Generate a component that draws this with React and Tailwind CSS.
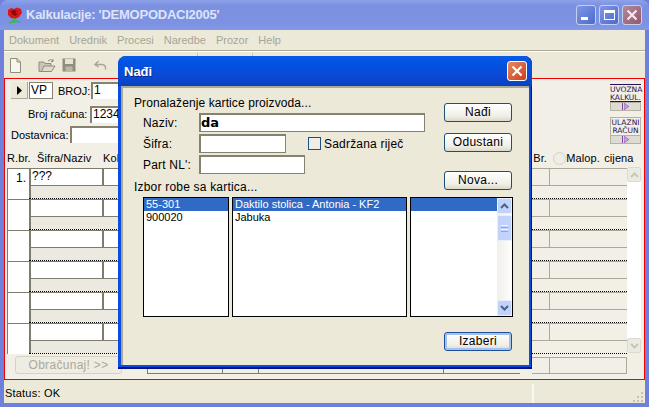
const font = { fontFamily: '"Liberation Sans", Arial, sans-serif' };

function Rose() {
  return (
    <svg width="17" height="17" viewBox="0 0 17 17">
      <path d="M2 3 L5 1 L8 2 L11 0.5 L15 2 L16 6 L13 10 L9 12 L5 11 L2 8 Z" fill="#d81818" />
      <path d="M5 4 L8 3 L11 4 L9 6 L12 7 L9 9 L6 7 Z" fill="#8a0808" />
      <path d="M8 11 L8 16 M8 14 L3 16 M9 14 L14 15" stroke="#2fc42f" strokeWidth="1.6" fill="none" />
    </svg>
  );
}

function TitleButton({ kind }) {
  const bg = kind === "close"
    ? "bg-[linear-gradient(135deg,#b08a9c,#98566c)]"
    : "bg-[linear-gradient(135deg,#7f97e8,#4e69cc)]";
  return (
    <div className={`w-[20px] h-[20px] rounded-[3px] border border-[#c4d0f0] flex items-center justify-center ${bg}`}>
      {kind === "min" && <div className="w-[7px] h-[3px] bg-white mt-[7px] mr-[3px]" />}
      {kind === "max" && <div className="w-[11px] h-[10px] border border-t-[3px] border-white" />}
      {kind === "close" && (
        <svg width="12" height="12" viewBox="0 0 12 12"><path d="M1.5 1.5 L10.5 10.5 M10.5 1.5 L1.5 10.5" stroke="#f2e9ee" strokeWidth="2.2" /></svg>
      )}
    </div>
  );
}

function Toolbar() {
  return (
    <div className="h-[27px] flex items-center pl-[5px] border-t border-[#fff]">
      <svg width="13" height="15" viewBox="0 0 13 15"><path d="M1.5 .5 H8 L11.5 4 V14.5 H1.5 Z M8 .5 V4 H11.5" fill="#f6f5ee" stroke="#8f8d80" /></svg>
      <svg className="ml-[16px]" width="18" height="15" viewBox="0 0 18 15"><path d="M1 4 H6 L7 5.5 H13 V13.5 H1 Z" fill="#c9c6b4" stroke="#8f8d80" /><path d="M3.5 13.5 L6 8 H17 L13.5 13.5 Z" fill="#dedbca" stroke="#8f8d80" /><path d="M10 3 Q13 0 15 3 M15 1 V3.5 H13" stroke="#8f8d80" fill="none" /></svg>
      <svg className="ml-[6px]" width="14" height="14" viewBox="0 0 14 14"><rect x=".5" y=".5" width="13" height="13" fill="#8f8d80" /><rect x="3" y="1" width="8" height="5" fill="#e6e3d3" /><rect x="3.5" y="8.5" width="7" height="5" fill="#bab7a7" /></svg>
      <svg className="ml-[18px]" width="13" height="10" viewBox="0 0 13 10"><path d="M4.5 1 L1 4.5 L4.5 7 M1.5 4.5 H8 Q12 4.5 11.5 9.5" stroke="#a7a596" strokeWidth="1.4" fill="none" /></svg>
      <div className="ml-[90px] self-start mt-[1px] w-[1px] h-[4px] bg-[#c4c1b0]" />
      <div className="ml-[54px] self-start mt-[1px] w-[1px] h-[4px] bg-[#c4c1b0]" />
    </div>
  );
}

function SideButton({ lines, className, boxed }) {
  return (
    <div className={`w-[31px] text-center text-[#2a1050] ${className || ""}`} style={{ fontFamily: '"DejaVu Sans", sans-serif' }}>
      <div className={boxed ? "h-[18px] border-t border-x border-[#b5b2a5] pt-[1px]" : "h-[18px] border-y border-[#2a1050] pt-[1px]"}>
        {lines.map((l) => <div key={l} className="text-[7.5px] leading-[8px] whitespace-nowrap">{l}</div>)}
      </div>
      <div className="h-[9px] mt-[0px] bg-[#dedcd2] border border-[#b5b2a5] flex items-center justify-center">
        <div className="w-[1px] h-[7px] bg-[#7a4aa0] mr-[1px]" />
        <svg width="5" height="7" viewBox="0 0 5 7"><path d="M0 0 L5 3.5 L0 7 Z" fill="#c79ae0" stroke="#7a4aa0" strokeWidth=".5" /></svg>
      </div>
    </div>
  );
}

function Row({ first }) {
  return (
    <div className="h-[31px] flex">
      <div className="w-[22px] bg-white border-t border-l border-[#7f7c6e] text-[12px] leading-[19px] pl-[8px]">{first}</div>
      <div className="flex-1 min-w-0 flex flex-col">
        <div className="h-[17px] flex">
          <div className="w-[73px] bg-white border-t border-l-2 border-[#7f7c6e] text-[12px] leading-[15px] pl-[1px]">{first ? "???" : ""}</div>
          <div className="w-[430px] bg-white border-t border-l-2 border-[#7f7c6e]" />
          <div className="w-[17px] border-t border-[#aca899]" />
          <div className="w-[78px] border-t border-l border-[#aca899]" />
        </div>
        <div className="flex-1 flex border-b border-black [border-bottom-style:dotted]">
          <div className="w-[503px] bg-[#ebe9e0] border-t border-l-2 border-[#7f7c6e]" />
          <div className="w-[95px] border-t border-[#aca899]" />
        </div>
      </div>
    </div>
  );
}

function XpButton({ children, className }) {
  return (
    <button className={`w-[68px] h-[19px] rounded-[3px] border border-[#1c4f7c] bg-[linear-gradient(#ffffff,#f0efe8_70%,#dcd8ca)] text-[12px] tracking-[0.3px] leading-[15px] text-black text-center ${className || ""}`}>
      {children}
    </button>
  );
}

function Field({ label, widthClass, children }) {
  return (
    <div className="h-[21px] flex items-center">
      <span className="w-[65px] pl-[9px] text-[12px] leading-[16px] tracking-[0.2px] whitespace-nowrap">{label}</span>
      <div className={`h-[19px] bg-white border-2 border-b border-r border-[#85826f] ${widthClass}`}>{children}</div>
    </div>
  );
}

function ListBox({ width, items, children }) {
  return (
    <div className={`relative h-[120px] bg-white border border-black ${width}`}>
      {items.map((t, i) => (
        <div key={i} className={`h-[13px] leading-[13px] text-[11px] pl-[2px] whitespace-nowrap ${i === 0 ? "bg-[#316ac5] text-white" : "text-black"}`}>{t || "\u00a0"}</div>
      ))}
      {children}
    </div>
  );
}

function ScrollBar() {
  return (
    <div className="absolute top-0 right-0 bottom-0 w-[15px] bg-[linear-gradient(90deg,#f0efe8,#fefefe)] flex flex-col justify-between">
      <div>
        <div className="h-[16px] bg-[#c1d3fb] border border-[#e8eefc] rounded-[2px] flex items-center justify-center">
          <svg width="9" height="6" viewBox="0 0 9 6"><path d="M1 5 L4.5 1.5 L8 5" stroke="#4d6185" strokeWidth="2" fill="none" /></svg>
        </div>
        <div className="h-[26px] mt-[1px] bg-[#c1d3fb] border border-[#e8eefc] rounded-[2px] flex flex-col items-center justify-center gap-[1px]">
          <div className="w-[7px] h-[1px] bg-[#eef3fe]" /><div className="w-[7px] h-[1px] bg-[#8da7dc]" /><div className="w-[7px] h-[1px] bg-[#eef3fe]" /><div className="w-[7px] h-[1px] bg-[#8da7dc]" />
        </div>
      </div>
      <div className="h-[16px] bg-[#c1d3fb] border border-[#e8eefc] rounded-[2px] flex items-center justify-center">
        <svg width="9" height="6" viewBox="0 0 9 6"><path d="M1 1 L4.5 4.5 L8 1" stroke="#4d6185" strokeWidth="2" fill="none" /></svg>
      </div>
    </div>
  );
}

function Dialog() {
  return (
    <div className="absolute left-[118px] top-[56px] w-[414px] h-[313px] rounded-t-[8px] bg-[#0a4be0] border-b-2 border-[#00138c] flex flex-col shadow-[inset_-1px_0_0_#00138c]">
      <div className="h-[30px] flex items-center justify-between pl-[6px] pr-[5px] rounded-t-[8px] bg-[linear-gradient(#0a5ae6,#0054e3_20%,#0a4bd8_60%,#0a46cc_85%,#0b3fb5)]">
        <span className="text-white font-bold text-[13px] pt-[1px]" style={{ textShadow: "1px 1px 0 #0a2a80" }}>Nađi</span>
        <div className="w-[20px] h-[20px] rounded-[3px] border border-white bg-[linear-gradient(135deg,#e88a60,#c8401c)] flex items-center justify-center">
          <svg width="12" height="12" viewBox="0 0 12 12"><path d="M1.5 1.5 L10.5 10.5 M10.5 1.5 L1.5 10.5" stroke="#fff" strokeWidth="2.2" /></svg>
        </div>
      </div>
      <div className="mx-[3px] mb-[2px] flex-1 bg-[#ece9d8] border-l-2 border-t-2 border-[#aca899] pl-[11px] pt-[8px] text-black">
        <div className="flex">
          <div className="w-[310px]">
            <div className="h-[16px] text-[12px] leading-[15px] tracking-[0.1px]">Pronalaženje kartice proizvoda...</div>
            <Field label="Naziv:" widthClass="w-[226px]"><div className="font-bold text-[13px] leading-[16px]" style={{ fontFamily: '"DejaVu Sans", sans-serif' }}>da</div></Field>
            <div className="h-[21px] flex items-center">
              <span className="w-[65px] pl-[9px] text-[12px] tracking-[0.2px]">Šifra:</span>
              <div className="w-[87px] h-[19px] bg-white border-2 border-b border-r border-[#85826f]" />
              <div className="ml-[22px] w-[13px] h-[13px] border border-[#1c5180] bg-[#eeeee6]" />
              <span className="ml-[3px] text-[12px] tracking-[0.2px] whitespace-nowrap">Sadržana riječ</span>
            </div>
            <Field label="Part NL':" widthClass="w-[106px]" />
            <div className="h-[22px] text-[12px] leading-[24px] tracking-[0.2px]">Izbor robe sa kartica...</div>
          </div>
          <div className="flex flex-col items-start pt-[7px]">
            <XpButton>Nađi</XpButton>
            <XpButton className="mt-[11px]">Odustani</XpButton>
            <XpButton className="mt-[19px]">Nova...</XpButton>
          </div>
        </div>
        <div className="flex gap-[3px] ml-[9px]">
          <ListBox width="w-[86px]" items={["55-301", "900020"]} />
          <ListBox width="w-[175px]" items={["Daktilo stolica - Antonia - KF2", "Jabuka"]} />
          <ListBox width="w-[103px]" items={[""]}><ScrollBar /></ListBox>
        </div>
        <div className="flex pl-[310px] mt-[15px]">
          <XpButton className="border-[#1c4f9c] shadow-[inset_0_0_0_2px_#a8c0ee]">Izaberi</XpButton>
        </div>
      </div>
    </div>
  );
}

export default function App() {
  return (
    <div className="relative w-[649px] h-[407px] bg-[#6d80dc] overflow-hidden text-black" style={font}>
      <div className="h-[30px] rounded-t-[8px] bg-[linear-gradient(#8da2ea,#7b90e0_20%,#7d92e2_80%,#8499e6)] flex items-center pl-[6px] pr-[7px]">
        <Rose />
        <span className="ml-[3px] text-[13px] font-bold tracking-[-0.25px] text-[#dde4f8] whitespace-nowrap">Kalkulacije: 'DEMOPODACI2005'</span>
        <div className="ml-auto flex gap-[3px]">
          <TitleButton kind="min" />
          <TitleButton kind="max" />
          <TitleButton kind="close" />
        </div>
      </div>
      <div className="mx-[4px] h-[373px] bg-[#ece9d8] flex flex-col">
        <div className="h-[21px] flex items-center pl-[5px] gap-[10px] text-[11px] text-[#a7a596] border-b border-[#aca899]">
          <span>Dokument</span><span>Urednik</span><span>Procesi</span><span>Naredbe</span><span>Prozor</span><span>Help</span>
        </div>
        <Toolbar />
        <div className="h-[302px] bg-[#f1efe6] border border-[#f00000] pl-[2px] flex flex-col">
          <div className="h-[72px] flex pt-[3px]">
            <div className="flex-1 min-w-0 text-[11px]">
              <div className="h-[17px] flex items-center pl-[4px]">
                <div className="w-[17px] h-[17px] bg-[#ece9d8] border-r border-b border-[#aca899] flex items-center justify-center">
                  <svg width="5" height="9" viewBox="0 0 5 9"><path d="M0 0 L5 4.5 L0 9 Z" fill="#000" /></svg>
                </div>
                <div className="ml-[1px] w-[24px] h-[17px] bg-white border border-[#85826f] text-[12px] leading-[15px] pl-[1px]">VP</div>
                <span className="ml-[5px] w-[33px] pt-[1px]">BROJ:</span>
                <div className="w-[60px] h-[17px] bg-white border-l-2 border-t-2 border-[#85826f] text-[12px] leading-[13px] pl-[1px]">1</div>
              </div>
              <div className="h-[17px] mt-[7px] flex items-center pl-[21px]">
                <span className="w-[62px]">Broj računa:</span>
                <div className="w-[60px] h-[17px] bg-white border-l-2 border-t-2 border-[#85826f] text-[12px] leading-[13px] pl-[1px]">12345</div>
              </div>
              <div className="h-[17px] mt-[3px] flex items-center pl-[4px]">
                <span className="w-[59px] pt-[2px]">Dostavnica:</span>
                <div className="w-[60px] h-[17px] bg-white border-l-2 border-t-2 border-[#85826f]" />
              </div>
            </div>
            <div className="w-[34px] pt-[2px]">
              <SideButton lines={["UVOZNA", "KALKUL."]} />
              <SideButton lines={["ULAZNI", "RAČUN"]} boxed className="mt-[6px]" />
            </div>
          </div>
          <div className="h-[17px] flex items-center text-[11px] tracking-[0.1px] pb-[2px]">
            <span className="w-[30px]">R.br.</span>
            <span className="w-[66px]">Šifra/Naziv</span>
            <span>Kol</span>
            <span className="ml-[414px] w-[20px]">Br.</span>
            <div className="w-[13px] h-[13px] rounded-full border border-[#d5d2c4] bg-[#eeede6]" />
            <span className="ml-[0px] w-[38px]">Malop.</span>
            <span>cijena</span>
          </div>
          <div className="flex">
            <div className="w-[620px] flex flex-col">
              <Row first="1." />
              <Row />
              <Row />
              <Row />
              <Row />
              <Row />
              <div className="h-[20px] flex">
                <button disabled className="mt-[2px] ml-[8px] w-[107px] h-[18px] rounded-[3px] border border-[#d5d2c4] bg-[#eeece3] text-[12px] tracking-[0.3px] leading-[15px] text-[#aca899] text-center">Obračunaj! &gt;&gt;</button>
                <div className="ml-[25px] flex-1 flex">
                  <div className="w-[75px] mt-[9px] border-l border-b border-[#7f7c6e]" />
                  <div className="w-[36px] mt-[9px] border-l border-b border-[#7f7c6e]" />
                  <div className="w-[185px] mt-[9px] border-l border-b border-[#7f7c6e]" />
                  <div className="w-[77px] mt-[9px] border-l border-b border-[#7f7c6e]" />
                  <div className="w-[12px]" />
                  <div className="w-[17px] mt-[3px] border-t border-b border-[#aca899]" />
                  <div className="flex-1 mt-[3px] border border-[#aca899]" />
                </div>
              </div>
            </div>
            <div className="w-[14px] -mt-[1px] h-[186px] bg-white flex flex-col justify-between">
              <div className="h-[15px] rounded-[2px] bg-[#ecebe2] border border-[#dcdad0] flex items-center justify-center">
                <svg width="9" height="6" viewBox="0 0 9 6"><path d="M1 5 L4.5 1.5 L8 5" stroke="#c8c6b8" strokeWidth="2" fill="none" /></svg>
              </div>
              <div className="h-[15px] rounded-[2px] bg-[#ecebe2] border border-[#dcdad0] flex items-center justify-center">
                <svg width="9" height="6" viewBox="0 0 9 6"><path d="M1 1 L4.5 4.5 L8 1" stroke="#c8c6b8" strokeWidth="2" fill="none" /></svg>
              </div>
            </div>
          </div>
        </div>
        <div className="h-[23px] flex items-center text-[11px] tracking-[0.2px] pl-[1px] pt-[3px]">
          <span className="w-[527px]">Status: OK</span>
          <div className="h-[19px] w-[2px] bg-[#f8f7f0]" />
          <svg className="ml-auto self-end mb-[1px] mr-[1px]" width="11" height="11" viewBox="0 0 11 11">
            <path d="M8 1h2v2h-2z M4 5h2v2h-2z M8 5h2v2h-2z M0 9h2v2h-2z M4 9h2v2h-2z M8 9h2v2h-2z" fill="#c4c1b0" />
          </svg>
        </div>
      </div>
      <Dialog />
    </div>
  );
}
